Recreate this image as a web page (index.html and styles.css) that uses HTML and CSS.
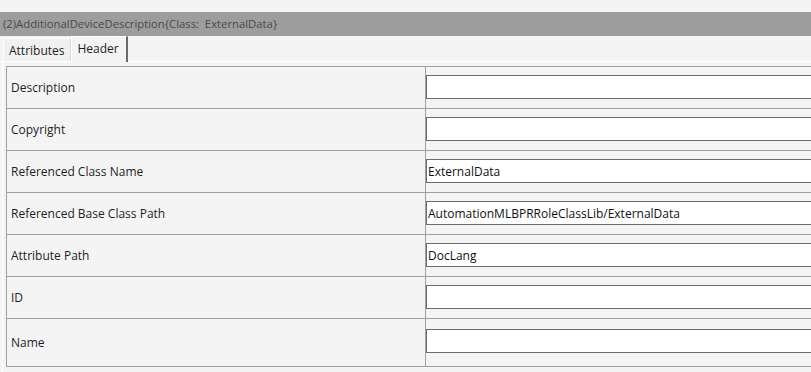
FILE: index.html
```
<!DOCTYPE html>
<html lang="en">
<head>
  <meta charset="UTF-8">
  <title>AdditionalDeviceDescription</title>
  <link rel="stylesheet" href="styles.css">
</head>
<body>
  <div class="window">
    <div class="title-bar">(2)AdditionalDeviceDescription{Class:&nbsp; ExternalData}</div>

    <div class="tab-strip">
      <div class="tab">Attributes</div>
      <div class="tab active">Header</div>
    </div>

    <div class="tab-panel">
      <div class="prop-grid">
        <div class="prop-label">Description</div>
        <div class="prop-value"><input type="text" value=""></div>

        <div class="prop-label">Copyright</div>
        <div class="prop-value"><input type="text" value=""></div>

        <div class="prop-label">Referenced Class Name</div>
        <div class="prop-value"><input type="text" value="ExternalData"></div>

        <div class="prop-label">Referenced Base Class Path</div>
        <div class="prop-value"><input type="text" value="AutomationMLBPRRoleClassLib/ExternalData"></div>

        <div class="prop-label">Attribute Path</div>
        <div class="prop-value"><input type="text" value="DocLang"></div>

        <div class="prop-label">ID</div>
        <div class="prop-value"><input type="text" value=""></div>

        <div class="prop-label last">Name</div>
        <div class="prop-value last"><input type="text" value=""></div>
      </div>
    </div>
  </div>
</body>
</html>
```

FILE: styles.css
```
* {
  margin: 0;
  padding: 0;
  box-sizing: border-box;
}
html, body {
  width: 811px;
  height: 372px;
  overflow: hidden;
}
body {
  font-family: 'Open Sans', 'Noto Sans', Arial, sans-serif;
  font-size: 12px;
  color: #1e1e1e;
  background: #f4f4f4;
}
.window {
  padding-top: 12px;
}
.title-bar {
  height: 24px;
  line-height: 23px;
  padding-left: 3px;
  background: #9d9d9d;
  color: #4a4a4a;
  font-size: 11.3px;
  white-space: nowrap;
}
.tab-strip {
  height: 26px;
  display: flex;
  align-items: flex-end;
  padding-left: 3px;
  border-bottom: 1px solid #ffffff;
}
.tab {
  height: 23px;
  padding: 0 5px;
  line-height: 23px;
  background: #f0f0f0;
  border: 1px solid #ffffff;
  border-bottom: none;
  border-right: 1px solid #d8d8d8;
}
.tab.active {
  height: 26px;
  line-height: 23px;
  padding: 0 7px 0 6px;
  margin-bottom: -1px;
  background: #f4f4f4;
  border-right: 2px solid #6a6a6a;
}
.tab-panel {
  padding: 4px 0 0 3px;
  border-left: 1px solid #ffffff;
  margin-left: 2px;
  height: 310px;
}
.prop-grid {
  width: 820px;
  display: grid;
  grid-template-columns: 419px 1fr;
  grid-template-rows: repeat(6, 42px) 47px;
  border-top: 1px solid #a0a0a0;
  border-left: 1px solid #a0a0a0;
  border-bottom: 1px solid #a0a0a0;
}
.prop-label {
  display: flex;
  align-items: center;
  padding-left: 4px;
  border-right: 1px solid #a0a0a0;
  border-bottom: 1px solid #a0a0a0;
  white-space: nowrap;
}
.prop-value {
  padding: 8px 0 0 0;
  border-bottom: 1px solid #a0a0a0;
}
.prop-label.last,
.prop-value.last {
  border-bottom: none;
}
.prop-value.last {
  padding-top: 10px;
}
.prop-value input {
  display: block;
  width: 100%;
  height: 24px;
  border: 1px solid #6a6a6a;
  background: #ffffff;
  padding-left: 1px;
  font: inherit;
  color: #111;
  outline: none;
}
```
